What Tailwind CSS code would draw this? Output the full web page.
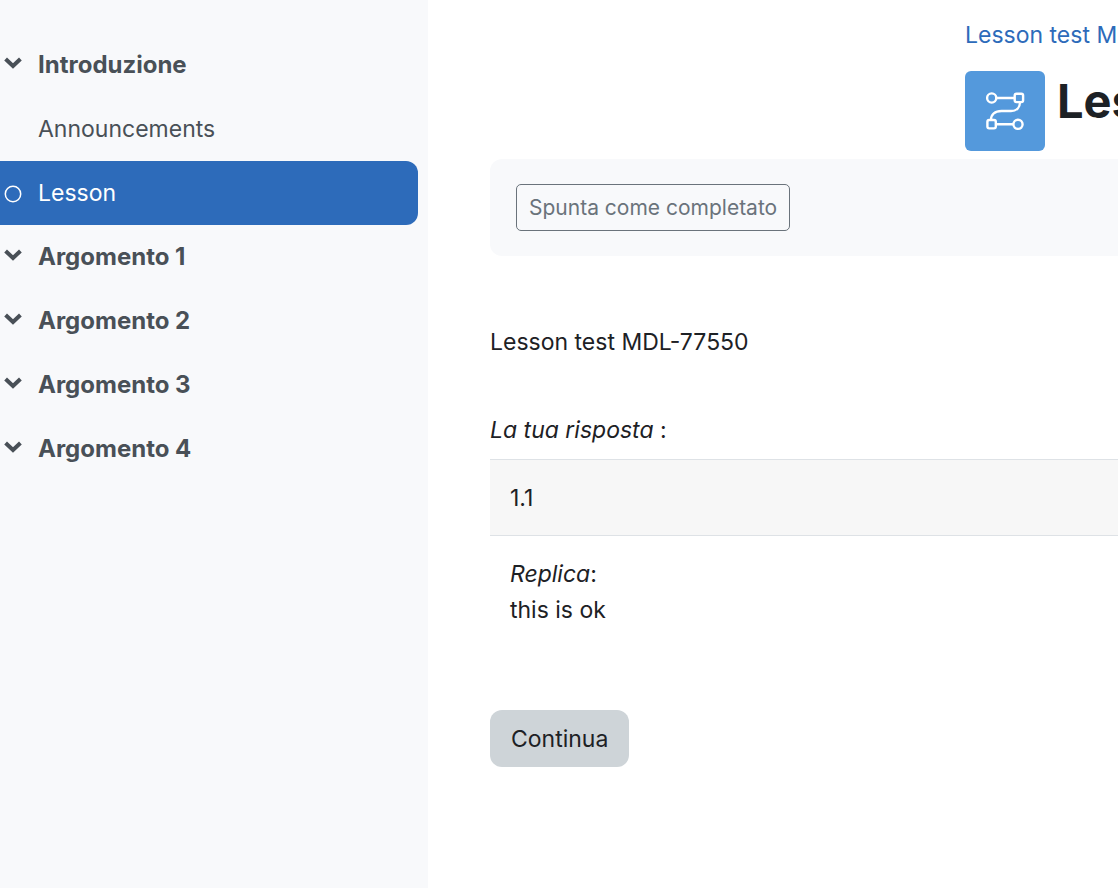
<!DOCTYPE html>
<html lang="it">
<head>
  <meta charset="UTF-8" />
  <meta name="viewport" content="width=device-width, initial-scale=1.0"/>
  <title>Lesson</title>
  <script src="https://cdn.jsdelivr.net/npm/@tailwindcss/browser@4"></script>
</head>
<body class="flex min-h-screen overflow-x-hidden bg-white font-[Inter,sans-serif] text-[23px] leading-9 text-[#1d2125]">

  <!-- Course index -->
  <nav class="w-[428px] shrink-0 bg-[#f8f9fb] pt-[33px] pr-[10px] text-[#495057]">
    <ul>
      <li>
        <a href="#" class="flex h-16 items-center pl-1 text-2xl font-bold">
          <svg class="mr-4 mb-1 w-[18px] shrink-0" viewBox="0 0 18 12" fill="none" stroke="currentColor" stroke-width="4"><path d="M1.600 2 9 9 16.400 2"/></svg>
          Introduzione
        </a>
      </li>
      <li><a href="#" class="flex h-16 items-center pl-[38px]">Announcements</a></li>
      <li>
        <a href="#" class="flex h-16 items-center rounded-r-xl bg-[#2d6bba] pl-1 text-white">
          <svg class="mt-[2px] mr-4 w-[18px] shrink-0" viewBox="0 0 18 18" fill="none" stroke="currentColor" stroke-width="1.5"><circle cx="9" cy="9" r="7.700"/></svg>
          Lesson
        </a>
      </li>
      <li>
        <a href="#" class="flex h-16 items-center pl-1 text-2xl font-bold">
          <svg class="mr-4 mb-1 w-[18px] shrink-0" viewBox="0 0 18 12" fill="none" stroke="currentColor" stroke-width="4"><path d="M1.600 2 9 9 16.400 2"/></svg>
          Argomento 1
        </a>
      </li>
      <li>
        <a href="#" class="flex h-16 items-center pl-1 text-2xl font-bold">
          <svg class="mr-4 mb-1 w-[18px] shrink-0" viewBox="0 0 18 12" fill="none" stroke="currentColor" stroke-width="4"><path d="M1.600 2 9 9 16.400 2"/></svg>
          Argomento 2
        </a>
      </li>
      <li>
        <a href="#" class="flex h-16 items-center pl-1 text-2xl font-bold">
          <svg class="mr-4 mb-1 w-[18px] shrink-0" viewBox="0 0 18 12" fill="none" stroke="currentColor" stroke-width="4"><path d="M1.600 2 9 9 16.400 2"/></svg>
          Argomento 3
        </a>
      </li>
      <li>
        <a href="#" class="flex h-16 items-center pl-1 text-2xl font-bold">
          <svg class="mr-4 mb-1 w-[18px] shrink-0" viewBox="0 0 18 12" fill="none" stroke="currentColor" stroke-width="4"><path d="M1.600 2 9 9 16.400 2"/></svg>
          Argomento 4
        </a>
      </li>
    </ul>
  </nav>

  <!-- Page content -->
  <main class="min-w-0 flex-1 overflow-hidden pt-[17px] pl-[62px]">

    <header class="pl-[475px] whitespace-nowrap">
      <a href="#" class="block text-[#2d6bba]">Lesson test MDL</a>
      <div class="mt-[18px] flex items-start">
        <svg class="mr-3 size-20 shrink-0 rounded-md bg-[#5499dc]" viewBox="0 0 80 80" fill="none" stroke="#fff" stroke-width="2.4">
          <circle cx="26.700" cy="27" r="4.600"/>
          <rect x="49.700" y="22.700" width="8.400" height="8.400" rx="1.800"/>
          <rect x="22.400" y="49" width="8.400" height="8.400" rx="1.800"/>
          <circle cx="53" cy="53.300" r="4.600"/>
          <path d="M31.500 27H49.500M31 53.300H48.500M55 31C55 36.500 51.500 40 46 40H36.500C30 40 26 43.500 26 49" stroke-width="2.400"/>
        </svg>
        <h1 class="text-[47px] leading-[60px] font-bold">Lesson</h1>
      </div>
    </header>

    <div class="mt-2 rounded-l-xl bg-[#f8f9fb] py-[25px] pl-[26px]">
      <button type="button" class="block h-[47px] rounded-[5px] border border-[#6a737b] px-3 text-[21px] text-[#6a737b]">Spunta come completato</button>
    </div>

    <p class="mt-[68px]">Lesson test MDL-77550</p>

    <p class="mt-[52px]"><em>La tua risposta</em> :</p>
    <table class="mt-[11px] w-full border-collapse">
      <tbody>
        <tr class="border-y border-[#dee2e6] bg-[#f7f7f7]">
          <td class="pt-5 pb-[19px] pl-5">1.1</td>
        </tr>
        <tr>
          <td class="py-5 pl-5"><em>Replica</em>:<br>this is ok</td>
        </tr>
      </tbody>
    </table>

    <button type="button" class="mt-[62px] h-[57px] rounded-xl bg-[#ced4d8] px-[21px]">Continua</button>
  </main>

</body>
</html>
